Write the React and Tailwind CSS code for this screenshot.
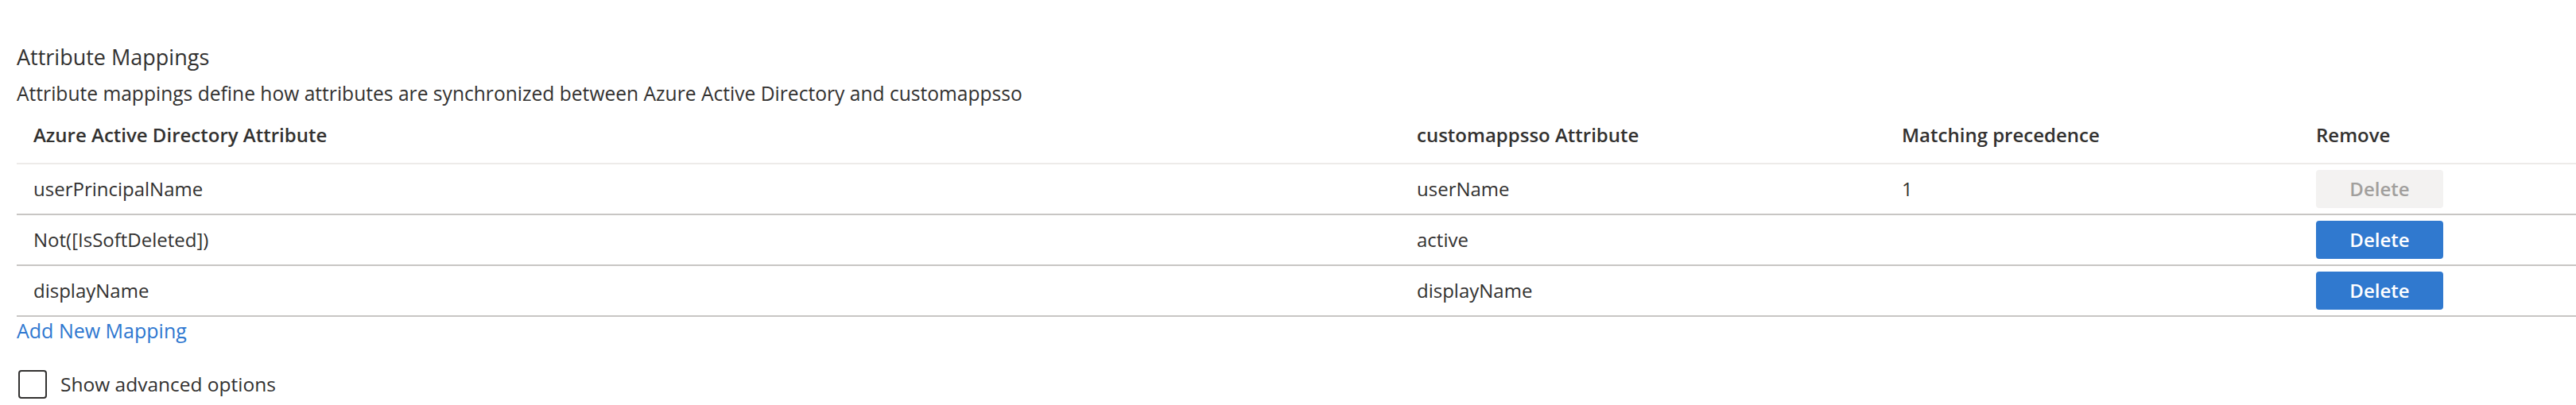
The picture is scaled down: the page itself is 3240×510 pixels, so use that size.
const rows = [
  { source: "userPrincipalName", target: "userName", precedence: "1", locked: true },
  { source: "Not([IsSoftDeleted])", target: "active", precedence: "", locked: false },
  { source: "displayName", target: "displayName", precedence: "", locked: false },
];

const cols = "grid grid-cols-[1740px_610px_521px_1fr]";

function DeleteButton({ disabled }) {
  return (
    <button
      disabled={disabled}
      className={
        disabled
          ? "w-[160px] h-[48px] rounded-[4px] bg-[#f3f2f1] text-[#a19f9d] text-[24px] font-semibold"
          : "w-[160px] h-[48px] rounded-[4px] bg-[#3079cf] text-white text-[24px] font-semibold"
      }
    >
      Delete
    </button>
  );
}

export default function App() {
  return (
    <div className="min-h-[510px] bg-white text-[#323130] font-['Open_Sans',sans-serif] pl-[21px]">
      <h2 className="pt-[54px] text-[27px] leading-[36px] font-normal">Attribute Mappings</h2>
      <p className="mt-[12px] text-[24.6px] leading-[32px]">
        Attribute mappings define how attributes are synchronized between Azure Active Directory and customappsso
      </p>

      <div className="text-[24px]">
        <div className={cols + " h-[73px] items-center border-b-2 border-[#edebe9] font-semibold"}>
          <div className="pl-[21px] pt-[1px]">Azure Active Directory Attribute</div>
          <div className="pl-[21px] pt-[1px]">customappsso Attribute</div>
          <div className="pl-[21px] pt-[1px]">Matching precedence</div>
          <div className="pl-[21px] pt-[1px]">Remove</div>
        </div>
        {rows.map((r) => (
          <div key={r.source} className={cols + " h-[64px] items-center border-b-2 border-[#c8c6c4]"}>
            <div className="pl-[21px]">{r.source}</div>
            <div className="pl-[21px]">{r.target}</div>
            <div className="pl-[21px]">{r.precedence}</div>
            <div className="pl-[21px]">
              <DeleteButton disabled={r.locked} />
            </div>
          </div>
        ))}
      </div>

      <a href="#" className="block mt-px text-[25px] leading-[32px] text-[#2e77d0] w-fit">
        Add New Mapping
      </a>

      <label className="mt-[34px] flex items-center gap-[17px] h-[36px] text-[24.5px]">
        <span className="ml-[2px] w-[36px] h-[36px] rounded-[4px] border-2 border-[#323130] bg-white" />
        Show advanced options
      </label>
    </div>
  );
}
